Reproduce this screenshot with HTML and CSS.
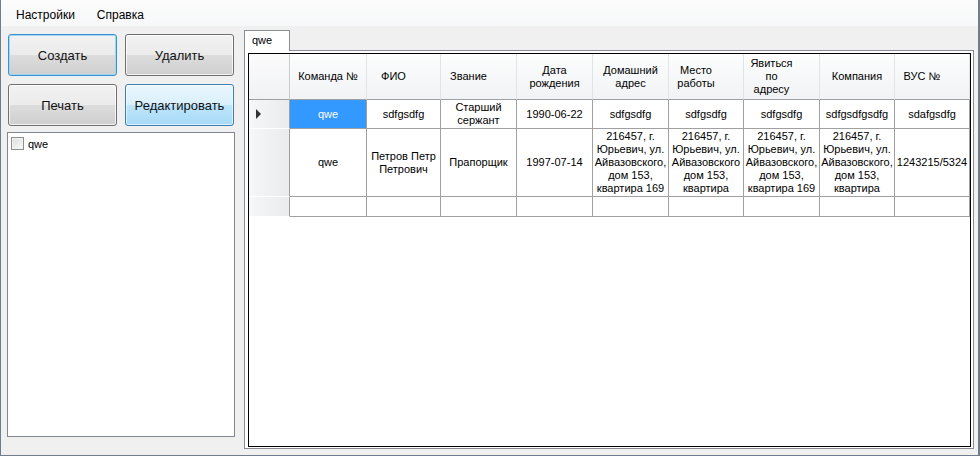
FILE: index.html
```html
<!DOCTYPE html>
<html lang="ru">
<head>
<meta charset="utf-8">
<title>Форма</title>
<link rel="stylesheet" href="styles.css">
</head>
<body>
<div class="window">
  <div class="menubar">
    <span class="menu-item">Настройки</span>
    <span class="menu-item">Справка</span>
  </div>
  <div class="main">
    <div class="left">
      <div class="buttons">
        <button class="btn btn-default">Создать</button>
        <button class="btn">Удалить</button>
        <button class="btn">Печать</button>
        <button class="btn btn-hover">Редактировать</button>
      </div>
      <div class="listbox">
        <div class="list-item"><span class="checkbox"></span><span class="item-text">qwe</span></div>
      </div>
    </div>
    <div class="right">
      <div class="tabs"><div class="tab">qwe</div></div>
      <div class="tabpage">
        <div class="grid">
          <div class="corner"></div>
          <div class="h"><span>Команда №</span></div>
          <div class="h hs"><span>ФИО</span></div>
          <div class="h hs"><span>Звание</span></div>
          <div class="h"><span>Дата<br>рождения</span></div>
          <div class="h"><span>Домашний<br>адрес</span></div>
          <div class="h hs"><span>Место<br>работы</span></div>
          <div class="h hs"><span>Явиться<br>по<br>адресу</span></div>
          <div class="h"><span>Компания</span></div>
          <div class="h hs"><span>ВУС №</span></div>

          <div class="rh"><span class="arrow"></span></div>
          <div class="c sel"><span>qwe</span></div>
          <div class="c"><span>sdfgsdfg</span></div>
          <div class="c"><span>Старший<br>сержант</span></div>
          <div class="c"><span>1990-06-22</span></div>
          <div class="c"><span>sdfgsdfg</span></div>
          <div class="c"><span>sdfgsdfg</span></div>
          <div class="c"><span>sdfgsdfg</span></div>
          <div class="c"><span>sdfgsdfgsdfg</span></div>
          <div class="c"><span>sdafgsdfg</span></div>

          <div class="rh"></div>
          <div class="c"><span>qwe</span></div>
          <div class="c"><span>Петров Петр<br>Петрович</span></div>
          <div class="c"><span>Прапорщик</span></div>
          <div class="c"><span>1997-07-14</span></div>
          <div class="c"><span>216457, г.<br>Юрьевич, ул.<br>Айвазовского,<br>дом 153,<br>квартира 169</span></div>
          <div class="c"><span>216457, г.<br>Юрьевич, ул.<br>Айвазовского<br>дом 153,<br>квартира</span></div>
          <div class="c"><span>216457, г.<br>Юрьевич, ул.<br>Айвазовского,<br>дом 153,<br>квартира 169</span></div>
          <div class="c"><span>216457, г.<br>Юрьевич, ул.<br>Айвазовского,<br>дом 153,<br>квартира</span></div>
          <div class="c"><span>1243215/5324</span></div>

          <div class="rh"></div>
          <div class="c"></div>
          <div class="c"></div>
          <div class="c"></div>
          <div class="c"></div>
          <div class="c"></div>
          <div class="c"></div>
          <div class="c"></div>
          <div class="c"></div>
          <div class="c"></div>
        </div>
      </div>
    </div>
  </div>
</div>
</body>
</html>
```

FILE: styles.css
```css
* { box-sizing: border-box; }

html, body {
  margin: 0;
  padding: 0;
  background: #f0f0f0;
}

body {
  font-family: "Liberation Sans", Arial, sans-serif;
  color: #000;
}

.window {
  width: 980px;
  height: 456px;
  background: #f0f0f0;
  border-left: 1px solid #6f7d8e;
  border-right: 2px solid #6f7d8e;
  border-bottom: 1px solid #6f7d8e;
  display: flex;
  flex-direction: column;
  overflow: hidden;
}

.menubar {
  height: 26px;
  flex: none;
  display: flex;
  align-items: center;
  gap: 22px;
  padding: 3px 0 0 15px;
  font-size: 12px;
  background: linear-gradient(#fcfcfc, #f7f8f9);
}

.menu-item { line-height: 16px; }

.main {
  flex: 1;
  display: flex;
}

.left {
  width: 243px;
  flex: none;
  padding: 8px 0 0 6px;
}

.buttons {
  margin-left: 1px;
  display: grid;
  grid-template-columns: 109px 109px;
  grid-template-rows: 42px 42px;
  column-gap: 8px;
  row-gap: 8px;
}

.btn {
  font-family: "Liberation Sans", Arial, sans-serif;
  font-size: 13px;
  color: #111;
  border: 1px solid #707070;
  border-radius: 3px;
  padding: 0;
  background: linear-gradient(#f2f2f2 0%, #ebebeb 50%, #dddddd 50%, #cfcfcf 100%);
  box-shadow: inset 0 0 0 1px rgba(255, 255, 255, 0.75);
}

.btn-default {
  border-color: #3c8fd0;
  box-shadow: inset 0 0 0 1px #9fd8f6;
}

.btn-hover {
  border-color: #3c7fb1;
  background: linear-gradient(#eaf6fd 0%, #d9f0fc 50%, #bee6fd 50%, #a7d9f5 100%);
  box-shadow: inset 0 0 0 1px rgba(255, 255, 255, 0.6);
}

.listbox {
  margin-top: 6px;
  width: 228px;
  height: 305px;
  border: 1px solid #828790;
  background: #fff;
  padding: 3px 3px;
}

.list-item {
  height: 15px;
  display: flex;
  align-items: center;
  gap: 4px;
  font-size: 11px;
}

.checkbox {
  width: 13px;
  height: 13px;
  border: 1px solid #8e8f8f;
  background: linear-gradient(135deg, #dcdcdc, #fbfbfb);
  box-shadow: inset 0 0 0 1px #f4f4f4;
}

.right {
  width: 730px;
  flex: none;
  padding-top: 4px;
  display: flex;
  flex-direction: column;
}

.tabs { display: flex; }

.tab {
  position: relative;
  z-index: 1;
  width: 46px;
  height: 21px;
  margin-bottom: -1px;
  border: 1px solid #898c95;
  border-bottom: none;
  background: #fff;
  font-size: 11px;
  line-height: 19px;
  padding-left: 7px;
}

.tabpage {
  width: 730px;
  height: 399px;
  border: 1px solid #898c95;
  background: #fff;
  padding: 2px 2px 1px 3px;
}

.grid {
  width: 723px;
  height: 394px;
  border: 1px solid #000;
  background: #fff;
  display: grid;
  grid-template-columns: 41px 77px 74px 76px 76px 76px 75px 76px 75px 75px;
  grid-template-rows: 46px 29px 68px 20px;
  align-content: start;
  font-size: 11px;
  line-height: 13px;
}

.grid > div {
  display: flex;
  align-items: center;
  justify-content: center;
  text-align: center;
  white-space: nowrap;
  border-right: 1px solid #a0a0a0;
  border-bottom: 1px solid #a0a0a0;
}

.grid > .corner {
  background: linear-gradient(#fbfbfc, #f1f2f4);
  border-right-color: #c9cbcf;
}

.grid > .h {
  background: linear-gradient(#ffffff 0%, #fafbfb 15%, #f2f3f5 100%);
  border-right-color: #e2e3e6;
}

.grid > .hs { padding-right: 20px; }

.grid > .rh {
  background: linear-gradient(to right, #f6f7f8, #eaebed);
  border-bottom-color: #ffffff;
  justify-content: flex-start;
  padding-left: 7px;
}

.grid > .sel {
  background: #3399ff;
  color: #fff;
}

.arrow {
  width: 0;
  height: 0;
  border-left: 5px solid #333;
  border-top: 5px solid transparent;
  border-bottom: 5px solid transparent;
}
```
